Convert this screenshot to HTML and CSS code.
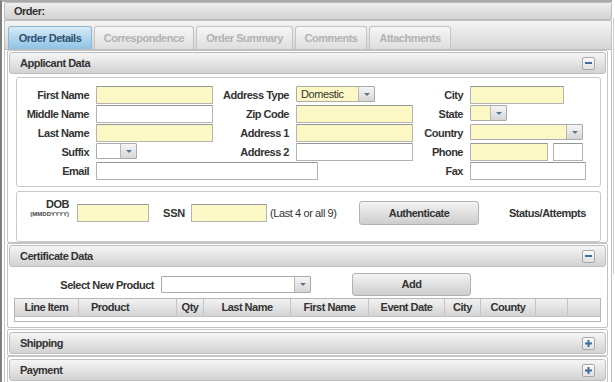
FILE: index.html
```html
<!DOCTYPE html>
<html lang="en">
<head>
    <meta charset="UTF-8">
    <meta name="viewport" content="width=device-width, initial-scale=1.0">
    <title>Order</title>
    <link rel="stylesheet" href="styles.css">
</head>
<body>
<div class="page">
    <div class="main">
        <div class="order-bar">Order:</div>
        <div class="tab-box">
            <div class="tab-strip">
                <div class="tab active t1">Order Details</div>
                <div class="tab t2">Correspondence</div>
                <div class="tab t3">Order Summary</div>
                <div class="tab t4">Comments</div>
                <div class="tab t5">Attachments</div>
            </div>

            <div class="panel applicant-panel">
                <div class="panel-head">
                    <span>Applicant Data</span>
                    <span class="toggle"><svg width="7" height="2"><rect width="7" height="2" fill="#3f6f98"/></svg></span>
                </div>
                <div class="applicant-body">
                    <div class="box form-grid">
                        <div class="lbl">First Name</div>
                        <div class="fld req w117"></div>
                        <div class="lbl">Address Type</div>
                        <div class="sel req w79"><span class="val">Domestic</span><span class="arr"></span></div>
                        <div class="lbl">City</div>
                        <div class="fld req w94"></div>

                        <div class="lbl">Middle Name</div>
                        <div class="fld w117"></div>
                        <div class="lbl">Zip Code</div>
                        <div class="fld req w117"></div>
                        <div class="lbl">State</div>
                        <div class="sel req w37"><span class="val"></span><span class="arr"></span></div>

                        <div class="lbl">Last Name</div>
                        <div class="fld req w117"></div>
                        <div class="lbl">Address 1</div>
                        <div class="fld req w117"></div>
                        <div class="lbl">Country</div>
                        <div class="sel req w113"><span class="val"></span><span class="arr"></span></div>

                        <div class="lbl">Suffix</div>
                        <div class="sel w41"><span class="val"></span><span class="arr"></span></div>
                        <div class="lbl">Address 2</div>
                        <div class="fld w117"></div>
                        <div class="lbl">Phone</div>
                        <div class="pair">
                            <div class="fld req w78"></div>
                            <div class="fld w30"></div>
                        </div>

                        <div class="lbl">Email</div>
                        <div class="fld email"></div>
                        <div class="lbl fax-lbl">Fax</div>
                        <div class="fld w116"></div>
                    </div>

                    <div class="box dob-row">
                        <div class="dob-lbl">
                            <div>DOB</div>
                            <div class="dob-fmt">(MMDDYYYY)</div>
                        </div>
                        <div class="fld req dob-in"></div>
                        <div class="ssn-lbl">SSN</div>
                        <div class="fld req ssn-in"></div>
                        <div class="note">(Last 4 or all 9)</div>
                        <div class="btn auth-btn">Authenticate</div>
                        <div class="status">Status/Attempts</div>
                    </div>
                </div>
            </div>

            <div class="panel">
                <div class="panel-head">
                    <span>Certificate Data</span>
                    <span class="toggle"><svg width="7" height="2"><rect width="7" height="2" fill="#3f6f98"/></svg></span>
                </div>
                <div class="cert-body">
                    <div class="product-row">
                        <div class="cert-lbl">Select New Product</div>
                        <div class="sel product-sel"><span class="val"></span><span class="arr"></span></div>
                        <div class="btn add-btn">Add</div>
                    </div>
                    <div class="grid-table">
                        <div class="th">Line Item</div>
                        <div class="th th-left">Product</div>
                        <div class="th">Qty</div>
                        <div class="th">Last Name</div>
                        <div class="th">First Name</div>
                        <div class="th">Event Date</div>
                        <div class="th">City</div>
                        <div class="th">County</div>
                        <div class="th"></div>
                        <div class="th"></div>
                        <div class="empty-row"></div>
                    </div>
                </div>
            </div>

            <div class="panel closed first-closed">
                <div class="panel-head">
                    <span>Shipping</span>
                    <span class="toggle"><svg width="7" height="7"><rect x="0" y="2.5" width="7" height="2" fill="#3f6f98"/><rect x="2.5" y="0" width="2" height="7" fill="#3f6f98"/></svg></span>
                </div>
            </div>

            <div class="panel closed">
                <div class="panel-head">
                    <span>Payment</span>
                    <span class="toggle"><svg width="7" height="7"><rect x="0" y="2.5" width="7" height="2" fill="#3f6f98"/><rect x="2.5" y="0" width="2" height="7" fill="#3f6f98"/></svg></span>
                </div>
            </div>
        </div>
    </div>
    <div class="side"></div>
</div>
</body>
</html>
```

FILE: styles.css
```css
* {
    box-sizing: border-box;
}

body {
    margin: 0;
    font-family: "Liberation Sans", Arial, sans-serif;
    font-size: 11px;
    color: #333;
    background: #fff;
}

.page {
    display: flex;
    width: 615px;
    height: 382px;
    overflow: hidden;
}

.main {
    width: 612px;
    border-left: 2px solid #7f7f7f;
    border-top: 2px solid #a9a9a9;
    padding-left: 2px;
}

.side {
    width: 2px;
    height: 256px;
    margin: 18px 0 0 1px;
    border-left: 1px solid #cfcfcf;
}

.order-bar {
    height: 18px;
    border: 1px solid #bcbcbc;
    border-radius: 2px;
    background: linear-gradient(#eeeeee, #d2d2d2);
    font-weight: bold;
    letter-spacing: -0.5px;
    line-height: 16px;
    padding-left: 9px;
}

.tab-box {
    height: 362px;
    border: 1px solid #c0c0c0;
    border-bottom: none;
    overflow: hidden;
}

/* tabs */
.tab-strip {
    height: 29px;
    display: flex;
    align-items: flex-end;
    gap: 2px;
    padding: 5px 0 0 3px;
    background: linear-gradient(#f4f4f4, #d5d5d5);
    border-bottom: 1px solid #bdbdbd;
}

.tab {
    height: 23px;
    border: 1px solid #c4c4c4;
    border-bottom: none;
    border-radius: 3px 3px 0 0;
    background: linear-gradient(#f6f6f6, #dedede);
    color: #b2b2b2;
    font-weight: bold;
    letter-spacing: -0.5px;
    text-align: center;
    line-height: 22px;
}

.tab.active {
    background: linear-gradient(#d6eaf7, #8fc2e3);
    border-color: #92b6cf;
    color: #2f5272;
}

.t1 { width: 84px; }
.t2 { width: 100px; }
.t3 { width: 97px; }
.t4 { width: 72px; }
.t5 { width: 82px; }

/* panels */
.panel {
    margin: 0 3px 0 2px;
    border: 1px solid #c4c4c4;
    border-radius: 2px;
    padding: 1px;
}

.applicant-panel {
    padding-bottom: 0;
}

.panel.closed {
    padding: 2px 1px 1px;
}

.first-closed {
    margin-top: 1px;
}

.panel-head {
    height: 22px;
    display: flex;
    align-items: center;
    justify-content: space-between;
    padding: 0 10px;
    border: 1px solid #bebebe;
    border-radius: 3px;
    background: linear-gradient(#f5f5f5, #d2d2d2);
    font-weight: bold;
    letter-spacing: -0.5px;
}

.toggle {
    width: 13px;
    height: 13px;
    display: flex;
    align-items: center;
    justify-content: center;
    border: 1px solid #a8a8a8;
    border-radius: 2px;
    background: linear-gradient(#fbfbfb, #e2e2e2);
}

.toggle svg {
    display: block;
}

/* applicant form */
.applicant-body {
    padding: 3px 5px 0 7px;
}

.box {
    border: 1px solid #c9c9c9;
    border-radius: 3px;
    background: #fff;
}

.form-grid {
    height: 110px;
    display: grid;
    grid-template-columns: 72px 117px 69px 117px 43px 116px;
    grid-auto-rows: 18px;
    column-gap: 7px;
    row-gap: 1px;
    padding: 8px 0 6px;
}

.lbl {
    align-self: center;
    text-align: right;
    font-weight: bold;
    letter-spacing: -0.5px;
    white-space: nowrap;
}

.fld {
    height: 18px;
    border: 1px solid #b3b3b3;
    border-top-color: #969696;
    border-radius: 1px;
    background: #fff;
}

.fld.req,
.sel.req {
    background: #fbf8c6;
}

.sel {
    height: 16px;
    display: flex;
    align-self: start;
    border: 1px solid #aaaaaa;
    border-radius: 1px;
    background: #fff;
}

.sel .val {
    flex: 1;
    padding-left: 4px;
    line-height: 14px;
    letter-spacing: -0.4px;
}

.sel .arr {
    width: 16px;
    display: flex;
    align-items: center;
    justify-content: center;
    border-left: 1px solid #b7b7b7;
    background: linear-gradient(#f6f6f6, #d5d5d5);
}

.sel .arr::after {
    content: "";
    border-left: 3px solid transparent;
    border-right: 3px solid transparent;
    border-top: 3px solid #5b7690;
}

.w30 { width: 30px; }
.w37 { width: 37px; }
.w41 { width: 41px; }
.w78 { width: 78px; }
.w79 { width: 79px; }
.w94 { width: 94px; }
.w113 { width: 113px; }
.w116 { width: 116px; }
.w117 { width: 117px; }

.pair {
    display: flex;
    gap: 5px;
}

.email {
    grid-column: 2 / 5;
    width: 222px;
}

.fax-lbl {
    grid-column: 5;
}

/* dob row */
.dob-row {
    height: 51px;
    margin-top: 4px;
    display: flex;
    align-items: flex-start;
    padding-top: 9px;
}

.dob-lbl {
    width: 52px;
    margin-top: -3px;
    text-align: right;
    font-weight: bold;
    letter-spacing: -0.5px;
    line-height: 12px;
}

.dob-fmt {
    font-size: 6px;
    letter-spacing: 0;
    line-height: 8px;
    color: #444;
}

.dob-in {
    width: 72px;
    margin: 3px 0 0 8px;
}

.ssn-lbl {
    width: 28px;
    margin-left: 14px;
    line-height: 24px;
    font-weight: bold;
    letter-spacing: -0.2px;
}

.ssn-in {
    width: 76px;
    margin-top: 3px;
}

.note {
    width: 89px;
    margin-left: 3px;
    line-height: 24px;
    letter-spacing: -0.4px;
    white-space: nowrap;
}

.btn {
    border: 1px solid #b2b2b2;
    border-radius: 3px;
    background: linear-gradient(#f3f3f3, #cdcdcd);
    font-weight: bold;
    letter-spacing: -0.5px;
    text-align: center;
}

.auth-btn {
    width: 120px;
    height: 24px;
    line-height: 22px;
}

.status {
    margin-left: 30px;
    line-height: 24px;
    font-weight: bold;
    letter-spacing: -0.5px;
}

/* certificate */
.cert-body {
    padding: 6px 0 4px;
}

.product-row {
    height: 23px;
    display: flex;
    align-items: center;
}

.cert-lbl {
    width: 145px;
    text-align: right;
    font-weight: bold;
    letter-spacing: -0.5px;
}

.product-sel {
    width: 150px;
    height: 17px;
    align-self: center;
    margin-left: 7px;
}

.add-btn {
    width: 119px;
    height: 23px;
    margin-left: 41px;
    line-height: 21px;
}

.grid-table {
    width: 587px;
    margin: 2px 0 0 5px;
    display: grid;
    grid-template-columns: 63px 98px 27px 87px 78px 76px 36px 55px 32px 33px;
    border: 1px solid #b6b6b6;
}

.th {
    height: 17px;
    border-left: 1px solid #c4c4c4;
    background: linear-gradient(#f2f2f2, #d4d4d4);
    font-weight: bold;
    letter-spacing: -0.5px;
    line-height: 17px;
    text-align: center;
    white-space: nowrap;
}

.th:first-child {
    border-left: none;
}

.th-left {
    text-align: left;
    padding-left: 12px;
}

.empty-row {
    grid-column: 1 / -1;
    height: 5px;
    border-top: 1px solid #c4c4c4;
    background: #fff;
}
```
